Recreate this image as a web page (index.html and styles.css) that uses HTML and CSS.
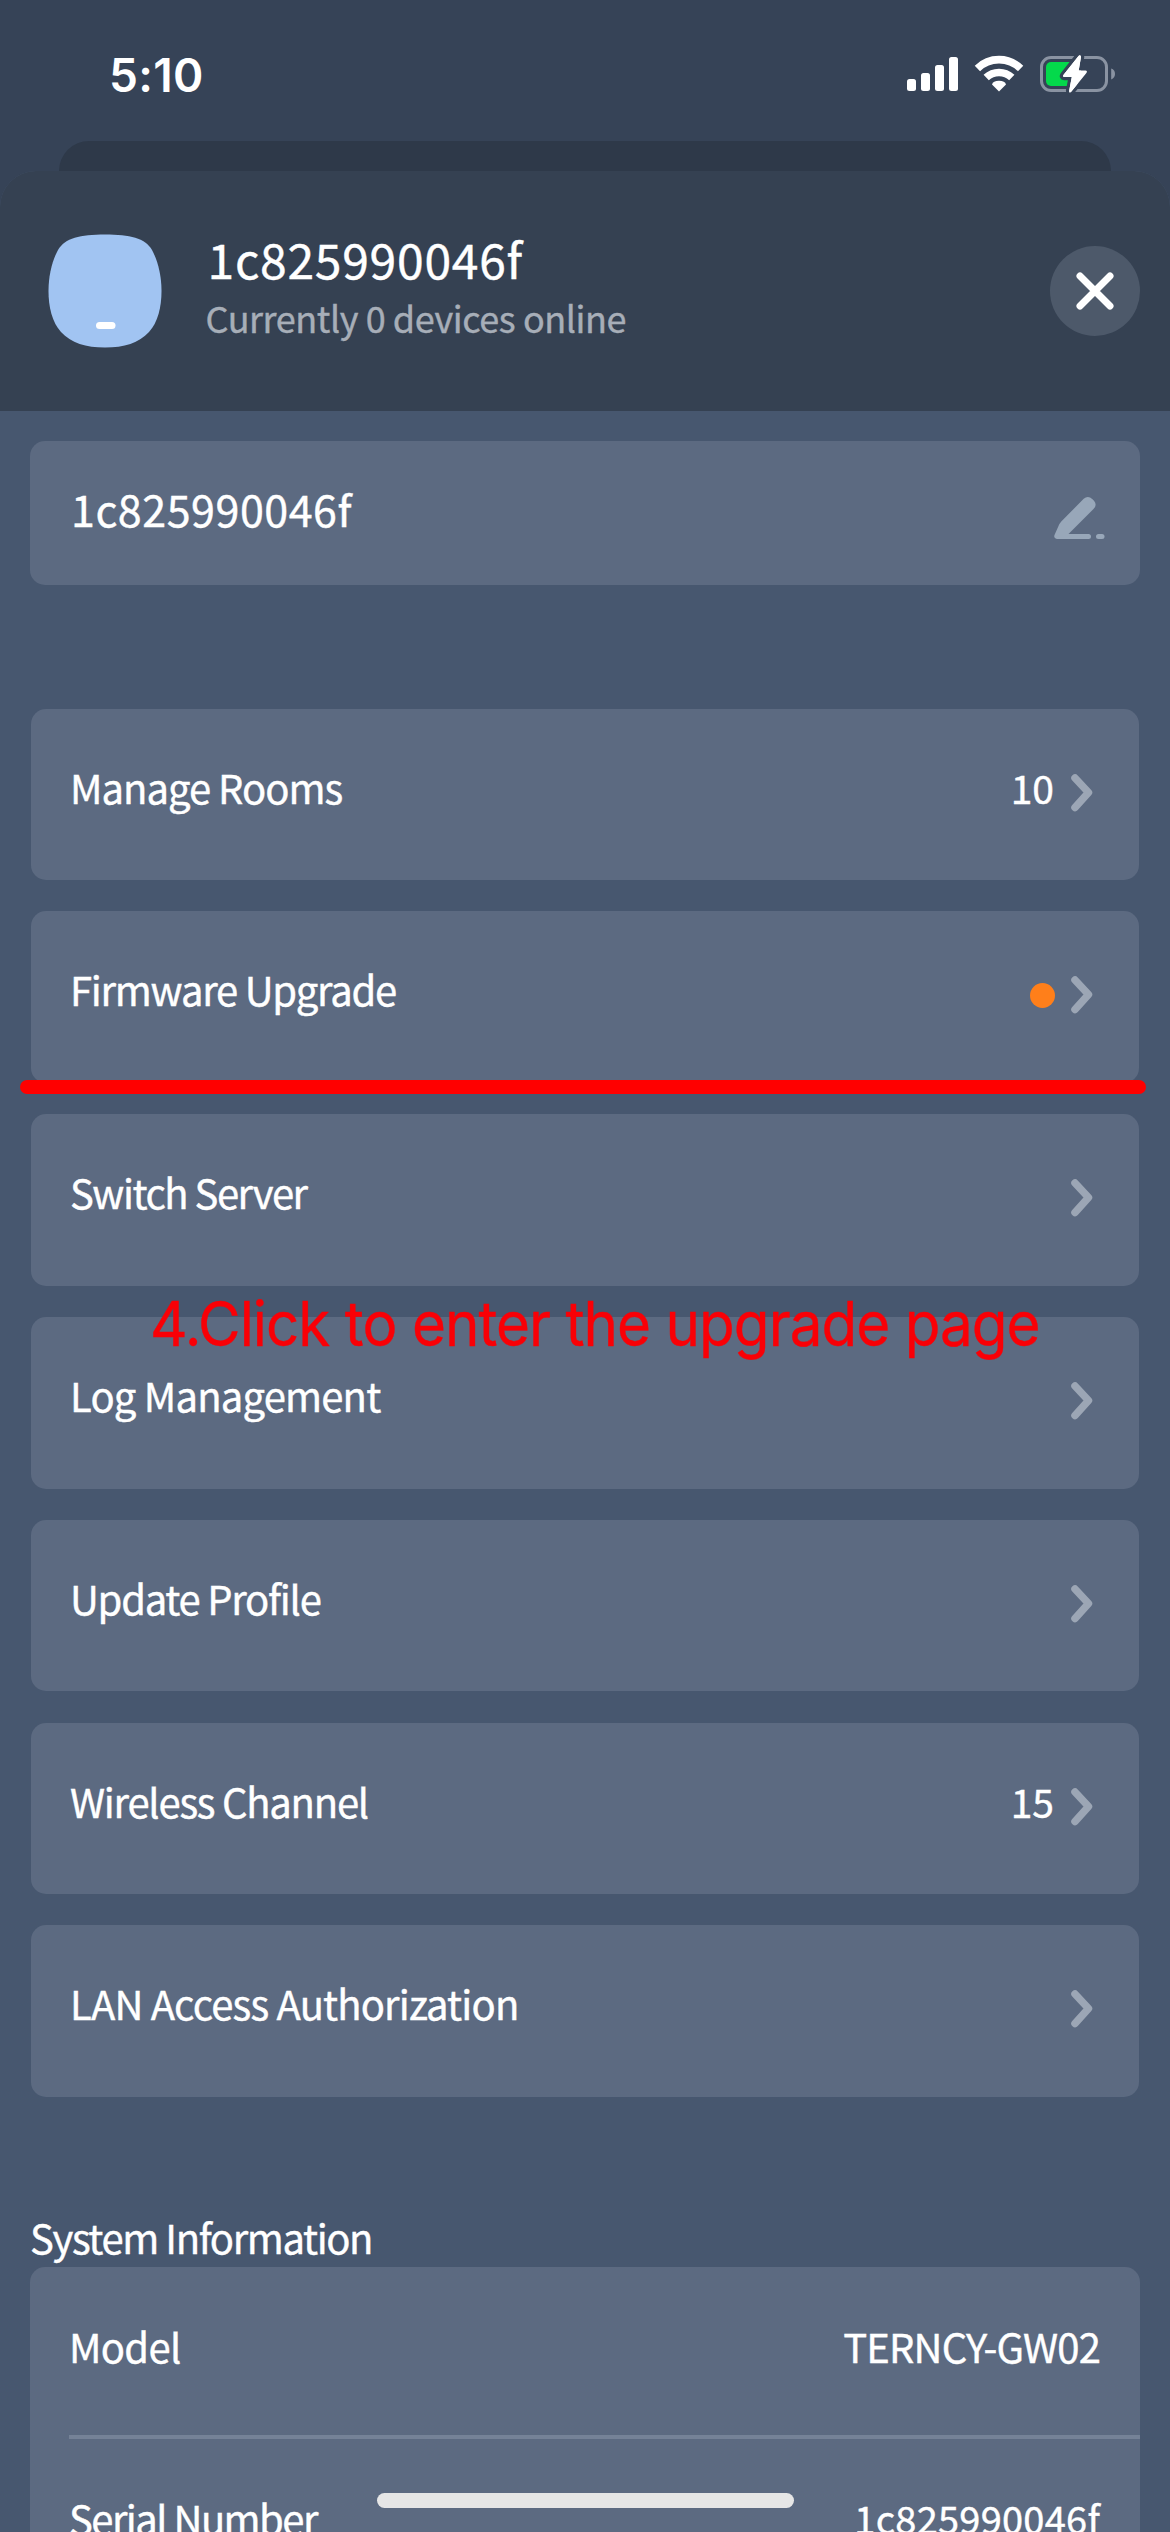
FILE: index.html
```html
<!DOCTYPE html>
<html lang="en">
<head>
<meta charset="utf-8">
<title>Gateway settings</title>
<link rel="stylesheet" href="styles.css">
</head>
<body>
<svg class="defs" width="0" height="0">
  <symbol id="chevron" viewBox="0 0 24 40"><path d="M5 5 18.500 19.500 5 34.500" fill="none" stroke="currentColor" stroke-width="7.5" stroke-linecap="round" stroke-linejoin="round"/></symbol>
</svg>
<div class="screen">
  <div class="status">
    <span class="time">5:10</span>
    <svg class="indicators" viewBox="0 0 212 46" width="212" height="46">
      <g fill="#fff">
        <rect x="2" y="29" width="9" height="12" rx="2.5"/>
        <rect x="16" y="23" width="9" height="18" rx="2.5"/>
        <rect x="30" y="15" width="9" height="26" rx="2.5"/>
        <rect x="44" y="7" width="9" height="34" rx="2.5"/>
      </g>
      <g fill="none" stroke="#fff" stroke-width="7.6">
        <path d="M72.4 18.4A31 31 0 0 1 115.6 18.4"/>
        <path d="M81.2 27.6A18.5 18.5 0 0 1 106.8 27.6"/>
      </g>
      <path d="M94 41.4 87 34.4Q88 31 94 30.800Q100 31 101 34.400Z" fill="#fff"/>
      <rect x="136.500" y="7.500" width="65" height="33" rx="9.500" fill="none" stroke="#8a93a2" stroke-width="3"/>
      <path d="M206.200 18.600Q210 20 210 24T206.200 29.400Z" fill="#8a93a2"/>
      <rect x="141" y="12" width="33" height="24" rx="5" fill="#04d94b"/>
      <path d="M173.500 6Q175.500 4 176 7L173.700 20.500H180.500Q182.800 20.800 181.400 23L166.200 41.700Q164 43.500 164.200 40.500L166.800 27H159.500Q157 26.700 158.600 24.700Z" fill="#fff" stroke="#364357" stroke-width="6.500" paint-order="stroke"/>
      <path d="M178 12H185V36H172Z" fill="#364357"/>
      <path d="M173.500 6Q175.500 4 176 7L173.700 20.500H180.500Q182.800 20.800 181.400 23L166.200 41.700Q164 43.500 164.200 40.500L166.800 27H159.500Q157 26.700 158.600 24.700Z" fill="#fff"/>
    </svg>
  </div>
  <div class="under-sheet"></div>
  <div class="sheet">
    <header class="header">
      <svg class="avatar" viewBox="0 0 114 114" width="114" height="114">
        <path d="M57 .5C82 .5 97 4 104 16C110 27 113.500 42 113.500 57C113.500 73 110 88 101 98C91 109 76 113.500 57 113.500S23 109 13 98C4 88 .5 73 .5 57C.5 42 4 27 10 16C17 4 32 .5 57 .5Z" fill="#a1c4f2"/>
        <rect x="48" y="88" width="19.500" height="7" rx="3.500" fill="#fff"/>
      </svg>
      <div class="heading">
        <h1>1c825990046f</h1>
        <p>Currently 0 devices online</p>
      </div>
      <div class="close"><svg viewBox="0 0 38 38" width="38" height="38"><path d="M4 4 34 34M34 4 4 34" stroke="#fff" stroke-width="7" stroke-linecap="round"/></svg></div>
    </header>
    <main class="content">
      <div class="card name">
        <span>1c825990046f</span>
        <svg class="pen" viewBox="0 0 52 44" width="52" height="44"><g fill="#98a7b9"><path d="M29.700 2.800Q34 -1.200 38.500 3.300L40 4.800Q43.500 9 39.500 13L14.500 38H34.500A2.500 2.500 0 0 1 34.500 43H2.800Q-.7 42.500.5 39L4.500 30Q5.500 27.500 7.500 25.300Z"/><rect x="42" y="38" width="8.500" height="5" rx="2.500"/></g></svg>
      </div>
      <div class="list">
        <div class="card row"><span>Manage Rooms</span><b>10</b><svg class="chevron"><use href="#chevron"/></svg></div>
        <div class="card row marked"><span>Firmware Upgrade</span><i class="dot"></i><svg class="chevron"><use href="#chevron"/></svg></div>
        <div class="card row"><span>Switch Server</span><svg class="chevron"><use href="#chevron"/></svg></div>
        <div class="card row noted"><span>Log Management</span><svg class="chevron"><use href="#chevron"/></svg><em class="note">4.Click to enter the upgrade page</em></div>
        <div class="card row"><span>Update Profile</span><svg class="chevron"><use href="#chevron"/></svg></div>
        <div class="card row"><span>Wireless Channel</span><b>15</b><svg class="chevron"><use href="#chevron"/></svg></div>
        <div class="card row"><span>LAN Access Authorization</span><svg class="chevron"><use href="#chevron"/></svg></div>
      </div>
      <h2>System Information</h2>
      <div class="card info">
        <div class="info-row"><span class="model">Model</span><span class="model-value">TERNCY-GW02</span></div>
        <div class="info-row"><span class="serial">Serial Number</span><span class="serial-value">1c825990046f</span></div>
      </div>
    </main>
  </div>
  <div class="home"></div>
</div>
</body>
</html>
```

FILE: styles.css
```css
* { box-sizing: border-box; margin: 0; padding: 0; }
body { background: #364357; }
.defs { position: absolute; }
.screen {
  position: relative;
  width: 1170px;
  height: 2532px;
  overflow: hidden;
  background: #364357;
  color: #fff;
  font-family: "Noto Sans CJK SC", "Noto Sans", sans-serif;
  font-size: 40px;
  -webkit-text-stroke: .4px currentColor;
}
.status {
  display: flex;
  justify-content: space-between;
  height: 141px;
  padding: 50px 53px 0 109px;
  -webkit-text-stroke: 0;
}
.time { font: 600 46px/50px Inter, sans-serif; letter-spacing: .3px; }
.under-sheet {
  height: 30px;
  margin: 0 59px;
  border-radius: 34px 34px 0 0;
  background: #2e3949;
}
.sheet { height: 2361px; border-radius: 36px 36px 0 0; background: #47576f; overflow: hidden; }
.header {
  display: flex;
  align-items: flex-start;
  height: 240px;
  padding: 57px 30px 0 48px;
  background: #354152;
}
.avatar { margin-top: 6px; }
.heading { flex: 1; padding-left: 43.500px; }
h1 { margin-left: 2px; font-size: 48px; font-weight: 400; line-height: 60px; letter-spacing: .74px; }
.heading p { margin-top: 4px; color: #a7aeb8; font-size: 36px; line-height: 50px; letter-spacing: -.43px; }
.close {
  display: flex;
  align-items: center;
  justify-content: center;
  width: 90px;
  height: 90px;
  margin-top: 18px;
  border-radius: 50%;
  background: #4d596a;
}
.content { padding: 30px 30px 0; }
.card { border-radius: 15px; background: #5c6a81; }
.name {
  display: flex;
  justify-content: space-between;
  height: 144px;
  padding: 37px 34px 0 41px;
  font-size: 43px;
  line-height: 60px;
  letter-spacing: .54px;
}
.pen { margin-top: 18px; }
.list { display: flex; flex-direction: column; gap: 31.100px; margin: 123.600px 1px 0; }
.row {
  display: flex;
  align-items: flex-start;
  height: 171.700px;
  padding: 48px 45px 0 39px;
  line-height: 60px;
  letter-spacing: -1.250px;
}
.row span { flex: 1; }
.row:nth-child(1) { letter-spacing: -1px; }
.row:nth-child(2) { letter-spacing: -1.260px; }
.row:nth-child(3) { letter-spacing: -1.500px; }
.row:nth-child(4) { letter-spacing: -.8px; }
.row:nth-child(7) { letter-spacing: -.85px; }
.row b { margin-right: 16px; font-size: 39px; font-weight: 400; letter-spacing: 0; }
.chevron { width: 24px; height: 40px; margin-top: 16px; color: #9ca6b5; }
.dot { width: 25px; height: 25px; margin: 24px 15px 0 0; border-radius: 50%; background: #ff7f1a; }
.marked, .noted { position: relative; }
.marked::after {
  content: "";
  position: absolute;
  z-index: 1;
  left: -11.500px;
  bottom: -11px;
  width: 1126px;
  height: 14px;
  border-radius: 7px;
  background: #f00;
}
.note {
  position: absolute;
  left: 119px;
  top: -31px;
  color: #f90006;
  font: 400 62px/76px Inter, sans-serif;
  letter-spacing: -1px;
  white-space: nowrap;
  transform: scaleX(.94);
  transform-origin: 0 0;
}
h2 { margin-top: 110px; font-size: 40px; font-weight: 400; line-height: 60px; letter-spacing: -1.400px; }
.info { border-radius: 15px 15px 0 0; height: 280px; }
.info-row {
  display: flex;
  justify-content: space-between;
  height: 172px;
  margin-left: 39px;
  padding: 49px 40px 0 0;
  line-height: 60px;
}
.info-row:first-child { border-bottom: 4px solid #758297; }
.model { letter-spacing: -.7px; }
.model-value { letter-spacing: -.85px; }
.serial { letter-spacing: -1.550px; }
.serial-value { font-size: 38px; letter-spacing: .25px; }
.home {
  position: absolute;
  left: 377px;
  bottom: 24px;
  width: 417px;
  height: 15px;
  border-radius: 8px;
  background: #e6e6e6;
}
```
